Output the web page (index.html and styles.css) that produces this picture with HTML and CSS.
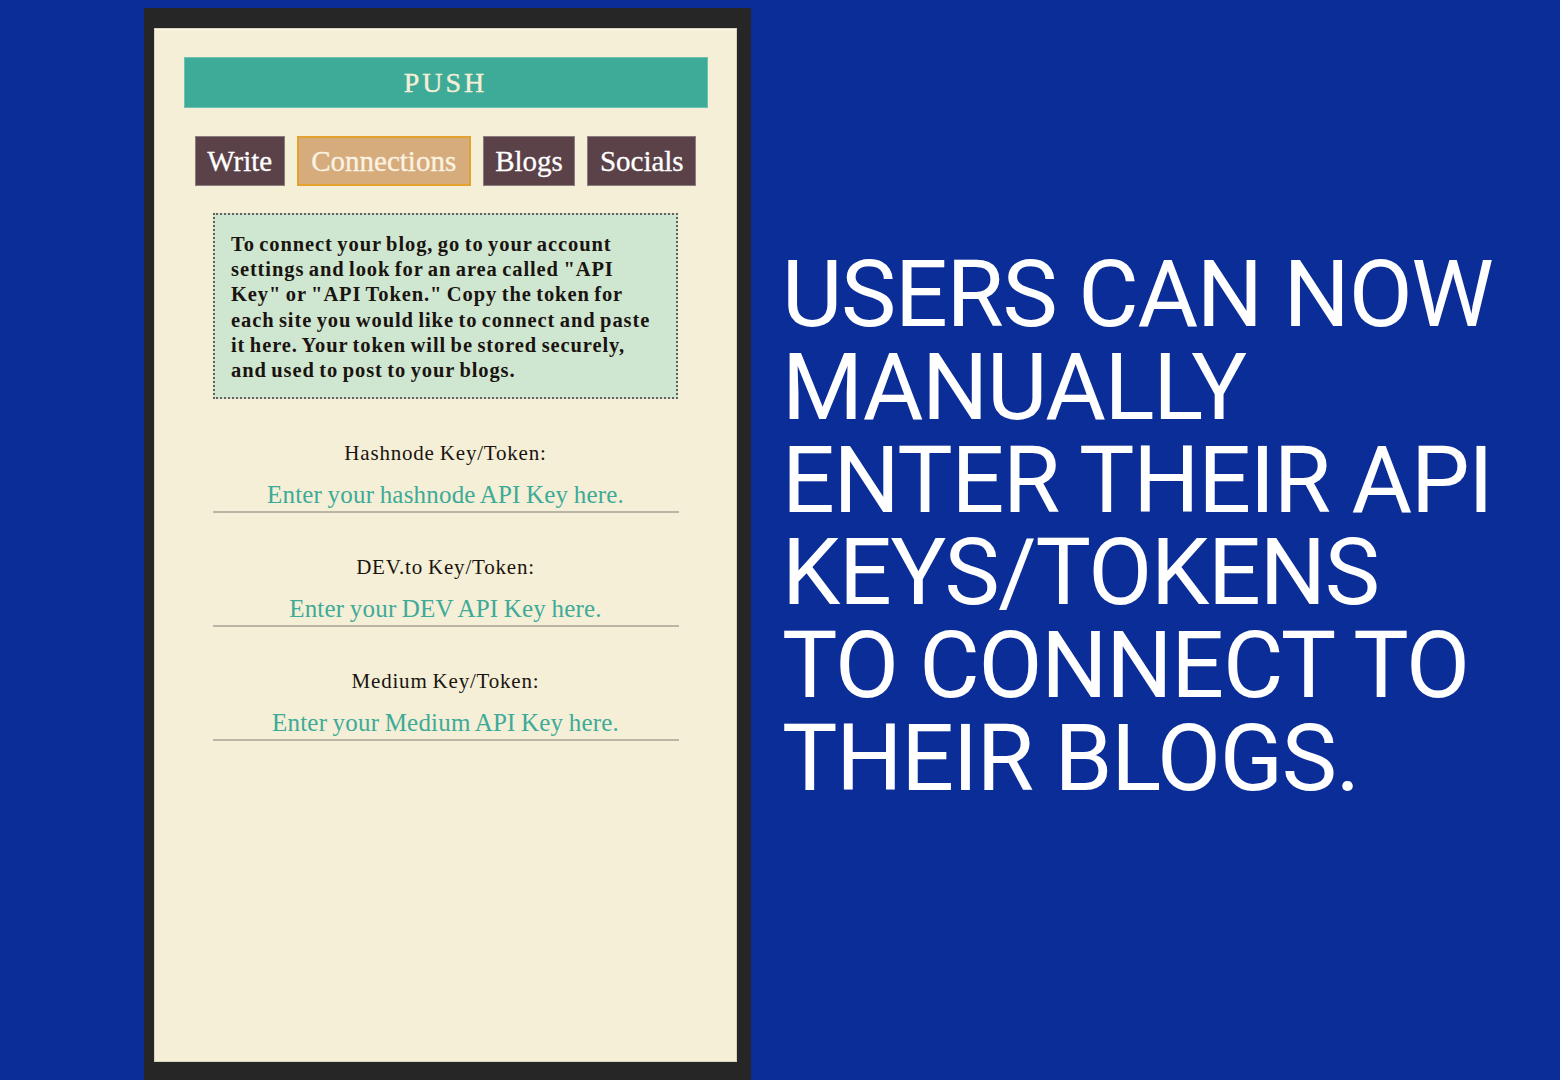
FILE: index.html
```html
<!DOCTYPE html>
<html>
<head>
<meta charset="utf-8">
<link rel="stylesheet" href="styles.css">
</head>
<body>
<div class="stage">
  <div class="device">
    <div class="panel">
      <div class="brand">PUSH</div>
      <nav class="tabs">
        <span class="tab">Write</span>
        <span class="tab active">Connections</span>
        <span class="tab">Blogs</span>
        <span class="tab">Socials</span>
      </nav>
      <div class="info">To connect your blog, go to your account<br>settings and look for an area called "API<br>Key" or "API Token." Copy the token for<br>each site you would like to connect and paste<br>it here. Your token will be stored securely,<br>and used to post to your blogs.</div>
      <div class="field">
        <label class="label">Hashnode Key/Token:</label>
        <div class="input">Enter your hashnode API Key here.</div>
      </div>
      <div class="field">
        <label class="label">DEV.to Key/Token:</label>
        <div class="input">Enter your DEV API Key here.</div>
      </div>
      <div class="field">
        <label class="label">Medium Key/Token:</label>
        <div class="input">Enter your Medium API Key here.</div>
      </div>
    </div>
  </div>
  <div class="caption">USERS CAN NOW<br>MANUALLY<br>ENTER THEIR API<br>KEYS/TOKENS<br>TO CONNECT TO<br>THEIR BLOGS.</div>
</div>
</body>
</html>
```

FILE: styles.css
```css
html, body {
  margin: 0;
  padding: 0;
}
body {
  width: 1560px;
  height: 1080px;
  overflow: hidden;
  background: #0b2d97;
}
.stage {
  display: flex;
  align-items: flex-start;
  height: 1080px;
}
.device {
  margin-left: 144px;
  margin-top: 8px;
  width: 607px;
  height: 1072px;
  box-sizing: border-box;
  background: #262626;
  padding: 20px 14px 18px 10px;
}
.panel {
  height: 100%;
  box-sizing: border-box;
  background: #f4efd6;
  border: 1px solid #d8d3bb;
  box-shadow: 0 1px 0 #fbf8ea inset;
  display: flex;
  flex-direction: column;
  align-items: center;
  padding-top: 28px;
  font-family: "Liberation Serif", "DejaVu Serif", serif;
}
.brand {
  width: 524px;
  height: 51px;
  box-sizing: border-box;
  background: #3eaa98;
  border: 1px solid #6fc2b0;
  color: #f4efd6;
  font-size: 28px;
  letter-spacing: 3px;
  display: flex;
  align-items: center;
  justify-content: center;
  -webkit-text-stroke: 0.4px #f4efd6;
}
.tabs {
  display: flex;
  gap: 12px;
  margin-top: 28px;
}
.tab {
  height: 50px;
  box-sizing: border-box;
  background: #5b4249;
  border: 1px solid #8a7d7d;
  color: #ffffff;
  font-size: 29px;
  padding: 0 11.5px;
  display: flex;
  align-items: center;
  -webkit-text-stroke: 0.3px #ffffff;
}
.tab.active {
  background: #d6ac7c;
  border: 2px solid #e3a12e;
  color: #fbf3e2;
  padding: 0 12.5px;
  -webkit-text-stroke: 0.3px #fbf3e2;
}
.info {
  margin-top: 27px;
  width: 465px;
  height: 186px;
  box-sizing: border-box;
  background: #cfe6d0;
  border: 2px dotted #6b5e5e;
  padding: 17px 0 0 16px;
  font-size: 20.5px;
  line-height: 25.2px;
  font-weight: bold;
  color: #1a1410;
  letter-spacing: 0.9px;
  word-spacing: -1.5px;
  white-space: nowrap;
}
.field {
  display: flex;
  flex-direction: column;
  align-items: center;
  width: 466px;
}
.info + .field {
  margin-top: 42px;
}
.field + .field {
  margin-top: 42px;
}
.label {
  font-size: 21px;
  color: #1a1410;
  line-height: 24px;
  letter-spacing: 0.8px;
  word-spacing: -1px;
}
.input {
  width: 100%;
  margin-top: 17px;
  text-align: center;
  color: #3eaa98;
  font-size: 25px;
  line-height: 26px;
  letter-spacing: 0.2px;
  word-spacing: -1px;
  border-bottom: 2px solid #b9b6a6;
  padding-bottom: 3px;
}
.caption {
  margin-left: 31px;
  margin-top: 249px;
  color: #ffffff;
  font-family: Roboto, "Noto Sans", sans-serif;
  font-size: 93px;
  line-height: 92.8px;
  letter-spacing: -1.3px;
  white-space: nowrap;
}
```
